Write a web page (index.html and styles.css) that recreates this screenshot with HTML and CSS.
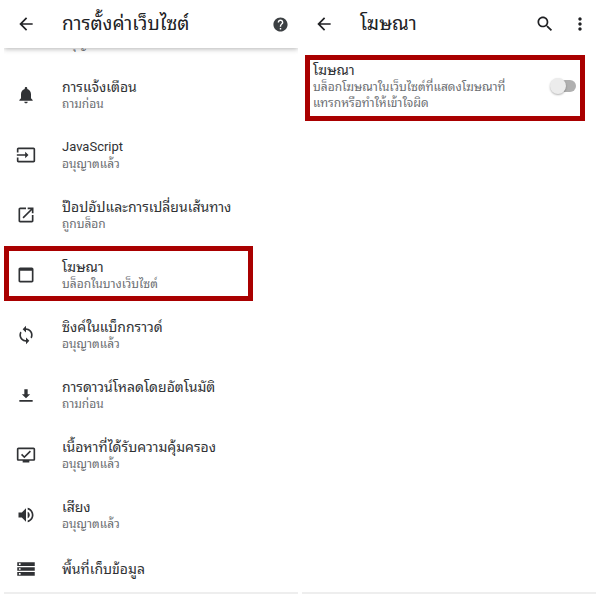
FILE: index.html
```html
<!DOCTYPE html>
<html lang="th">
  <head>
    <meta charset="utf-8">
    <meta name="viewport" content="width=device-width, initial-scale=1.0">
    <title>การตั้งค่าเว็บไซต์</title>
    <link rel="stylesheet" href="styles.css">
  </head>
  <body>
    <div class="panel">
      <header class="bar raised">
        <button class="iconButton" type="button" aria-label="กลับ">
          <svg class="icon" viewBox="0 0 24 24"><path d="M20 11H7.83l5.59-5.59L12 4l-8 8 8 8 1.41-1.41L7.83 13H20v-2z"/></svg>
        </button>
        <h1>การตั้งค่าเว็บไซต์</h1>
        <button class="iconButton" type="button" aria-label="ความช่วยเหลือ">
          <svg class="icon small" viewBox="0 0 24 24"><path d="M12 2C6.48 2 2 6.48 2 12s4.48 10 10 10 10-4.48 10-10S17.52 2 12 2zm1 17h-2v-2h2v2zm2.07-7.75l-.9.92C13.45 12.9 13 13.5 13 15h-2v-.5c0-1.1.45-2.1 1.17-2.83l1.24-1.26c.37-.36.59-.86.59-1.41 0-1.1-.9-2-2-2s-2 .9-2 2H8c0-2.21 1.79-4 4-4s4 1.79 4 4c0 .88-.36 1.68-.93 2.25z"/></svg>
        </button>
      </header>

      <ul class="list">
        <li class="row">
          <span class="icon"></span>
          <div class="text">
            <div class="title">&nbsp;</div>
            <div class="sub">อนุญาตแล้ว</div>
          </div>
        </li>
        <li class="row">
          <svg class="icon" viewBox="0 0 24 24"><path d="M12 22c1.1 0 2-.9 2-2h-4c0 1.1.9 2 2 2zm6-6v-5c0-3.07-1.64-5.64-4.5-6.32V4c0-.83-.67-1.5-1.5-1.5s-1.5.67-1.5 1.5v.68C7.63 5.36 6 7.92 6 11v5l-2 2v1h16v-1l-2-2z"/></svg>
          <div class="text">
            <div class="title">การแจ้งเตือน</div>
            <div class="sub">ถามก่อน</div>
          </div>
        </li>
        <li class="row">
          <svg class="icon" viewBox="0 0 24 24"><path d="M21 3.01H3c-1.1 0-2 .9-2 2V9h2V4.99h18v14.03H3V15H1v4.01c0 1.1.9 1.98 2 1.98h18c1.1 0 2-.88 2-1.98v-14c0-1.11-.9-2-2-2zM11 16l4-4-4-4v3H1v2h10v3z"/></svg>
          <div class="text">
            <div class="title latin">JavaScript</div>
            <div class="sub">อนุญาตแล้ว</div>
          </div>
        </li>
        <li class="row">
          <svg class="icon" viewBox="0 0 24 24"><path d="M19 19H5V5h7V3H5c-1.11 0-2 .9-2 2v14c0 1.1.89 2 2 2h14c1.1 0 2-.9 2-2v-7h-2v7zM14 3v2h3.59l-9.83 9.83 1.41 1.41L19 6.41V10h2V3h-7z"/></svg>
          <div class="text">
            <div class="title">ป๊อปอัปและการเปลี่ยนเส้นทาง</div>
            <div class="sub">ถูกบล็อก</div>
          </div>
        </li>
        <li class="row marked">
          <svg class="icon" viewBox="0 0 24 24"><path d="M19 3H5c-1.11 0-2 .9-2 2v14c0 1.1.89 2 2 2h14c1.1 0 2-.9 2-2V5c0-1.1-.9-2-2-2zm0 16H5V7h14v12z"/></svg>
          <div class="text">
            <div class="title">โฆษณา</div>
            <div class="sub">บล็อกในบางเว็บไซต์</div>
          </div>
        </li>
        <li class="row">
          <svg class="icon" viewBox="0 0 24 24"><path d="M12 4V1L8 5l4 4V6c3.31 0 6 2.69 6 6 0 1.01-.25 1.97-.7 2.8l1.46 1.46C19.54 15.03 20 13.57 20 12c0-4.42-3.58-8-8-8zm0 14c-3.31 0-6-2.69-6-6 0-1.01.25-1.97.7-2.8L5.24 7.74C4.46 8.97 4 10.43 4 12c0 4.42 3.58 8 8 8v3l4-4-4-4v3z"/></svg>
          <div class="text">
            <div class="title">ซิงค์ในแบ็กกราวด์</div>
            <div class="sub">อนุญาตแล้ว</div>
          </div>
        </li>
        <li class="row">
          <svg class="icon" viewBox="0 0 24 24"><path d="M17 11h-3V5h-4v6H7l5 5 5-5zM4 18v2h16v-2H4z"/></svg>
          <div class="text">
            <div class="title">การดาวน์โหลดโดยอัตโนมัติ</div>
            <div class="sub">ถามก่อน</div>
          </div>
        </li>
        <li class="row">
          <svg class="icon" viewBox="0 0 24 24"><path d="M21 3H3c-1.1 0-2 .9-2 2v12c0 1.1.9 2 2 2h5v2h8v-2h5c1.1 0 2-.9 2-2V5c0-1.1-.9-2-2-2zm0 14H3V5h18v12zM18 8l-1.4-1.4-6.6 6.5-2.6-2.5L6 12l4 4 8-8z"/></svg>
          <div class="text">
            <div class="title">เนื้อหาที่ได้รับความคุ้มครอง</div>
            <div class="sub">อนุญาตแล้ว</div>
          </div>
        </li>
        <li class="row">
          <svg class="icon" viewBox="0 0 24 24"><path d="M3 9v6h4l5 5V4L7 9H3zm13.5 3c0-1.77-1.02-3.29-2.5-4.03v8.05c1.48-.73 2.5-2.25 2.5-4.02zM14 3.23v2.06c2.89.86 5 3.54 5 6.71s-2.11 5.85-5 6.71v2.06c4.01-.91 7-4.49 7-8.77s-2.99-7.86-7-8.77z"/></svg>
          <div class="text">
            <div class="title">เสียง</div>
            <div class="sub">อนุญาตแล้ว</div>
          </div>
        </li>
        <li class="row short">
          <svg class="icon" viewBox="0 0 24 24"><path fill-rule="evenodd" d="M1.5 20h21v-4.5h-21V20zM3.5 16.8h2v2h-2v-2zM1.5 4v4.5h21V4h-21zM5.5 7.2h-2v-2h2v2zM1.5 14.2h21V9.8h-21v4.4zM3.5 11h2v2h-2v-2z"/></svg>
          <div class="text">
            <div class="title">พื้นที่เก็บข้อมูล</div>
          </div>
        </li>
      </ul>
    </div>

    <div class="panel">
      <header class="bar">
        <button class="iconButton" type="button" aria-label="กลับ">
          <svg class="icon" viewBox="0 0 24 24"><path d="M20 11H7.83l5.59-5.59L12 4l-8 8 8 8 1.41-1.41L7.83 13H20v-2z"/></svg>
        </button>
        <h1>โฆษณา</h1>
        <button class="iconButton" type="button" aria-label="ค้นหา">
          <svg class="icon" viewBox="0 0 24 24"><path d="M15.5 14h-.79l-.28-.27C15.41 12.59 16 11.11 16 9.5 16 5.91 13.09 3 9.5 3S3 5.91 3 9.5 5.91 16 9.5 16c1.61 0 3.09-.59 4.23-1.57l.27.28v.79l5 4.99L20.49 19l-4.99-5zm-6 0C7.01 14 5 11.99 5 9.5S7.01 5 9.5 5 14 7.01 14 9.5 11.99 14 9.5 14z"/></svg>
        </button>
        <button class="iconButton" type="button" aria-label="เพิ่มเติม">
          <svg class="icon" viewBox="0 0 24 24"><path d="M12 8c1.1 0 2-.9 2-2s-.9-2-2-2-2 .9-2 2 .9 2 2 2zm0 2c-1.1 0-2 .9-2 2s.9 2 2 2 2-.9 2-2-.9-2-2-2zm0 6c-1.1 0-2 .9-2 2s.9 2 2 2 2-.9 2-2-.9-2-2-2z"/></svg>
        </button>
      </header>

      <div class="setting">
        <label class="text" for="ads">
          <span class="title">โฆษณา</span>
          <span class="sub">บล็อกโฆษณาในเว็บไซต์ที่แสดงโฆษณาที่<br>แทรกหรือทำให้เข้าใจผิด</span>
        </label>
        <input class="switch" id="ads" type="checkbox">
      </div>
    </div>
  </body>
</html>
```

FILE: styles.css
```css
* {
  box-sizing: border-box;
}
body {
  margin: 0;
  padding: 0 4px 6px;
  height: 100vh;
  display: flex;
  gap: 4px;
  background: #fff;
  color: #303235;
  font-family: Roboto, "Noto Sans Thai Looped", "Noto Sans Thai", "Noto Sans", sans-serif;
}
.panel {
  flex: 1;
  min-width: 0;
  display: flex;
  flex-direction: column;
  border-bottom: 2px solid #eee;
}
.bar {
  display: flex;
  align-items: center;
  flex-shrink: 0;
  height: 48px;
  padding: 0 6px 0 12px;
  gap: 15px;
}
.raised {
  position: relative;
  z-index: 1;
  padding-right: 8px;
  background: #fff;
  box-shadow: 0 1px 5px rgba(0, 0, 0, 0.3);
  clip-path: inset(0 0 -8px 0);
}
h1 {
  flex: 1;
  margin: 0 0 0 11px;
  font-size: 19px;
  line-height: 32px;
  font-weight: normal;
  white-space: nowrap;
  color: #202124;
}
.iconButton {
  display: flex;
  justify-content: center;
  width: 20px;
  padding: 0;
  border: 0;
  background: none;
  color: #202124;
}
.icon {
  flex-shrink: 0;
  width: 20px;
  height: 20px;
  fill: currentColor;
}
.small {
  width: 17px;
  height: 17px;
  color: #3c4043;
}
.list {
  flex: 1;
  min-height: 0;
  margin: 0;
  padding: 0;
  list-style: none;
  overflow: hidden;
  display: flex;
  flex-direction: column;
  justify-content: flex-end;
}
.row {
  position: relative;
  display: flex;
  align-items: center;
  flex-shrink: 0;
  gap: 26px;
  height: 60px;
  padding: 0 12px;
}
.short {
  height: 47px;
}
.marked::after {
  content: "";
  position: absolute;
  top: 1px;
  right: 45px;
  bottom: 4px;
  left: 0;
  border: 5px solid #a90000;
}
.text {
  white-space: nowrap;
}
.title {
  display: block;
  font-size: 14px;
  line-height: 18px;
}
.latin {
  font-size: 13px;
}
.sub {
  display: block;
  font-size: 12px;
  line-height: 16px;
  color: #6b6e72;
}
.setting {
  display: flex;
  align-items: center;
  justify-content: space-between;
  margin: 7px 11px 0 3px;
  padding: 1px 4px 5px 3px;
  border: 5px solid #a90000;
}
.switch {
  appearance: none;
  position: relative;
  width: 26px;
  height: 12px;
  margin: 0;
  border-radius: 6px;
  background: linear-gradient(to right, transparent 8px, #b0b0b0 8px);
}
.switch::before {
  content: "";
  position: absolute;
  top: -2px;
  left: 0;
  width: 16px;
  height: 16px;
  border-radius: 50%;
  background: #ececec;
  box-shadow: 0 1px 2px rgba(0, 0, 0, 0.3);
}
.switch:checked::before {
  left: 10px;
}
```
